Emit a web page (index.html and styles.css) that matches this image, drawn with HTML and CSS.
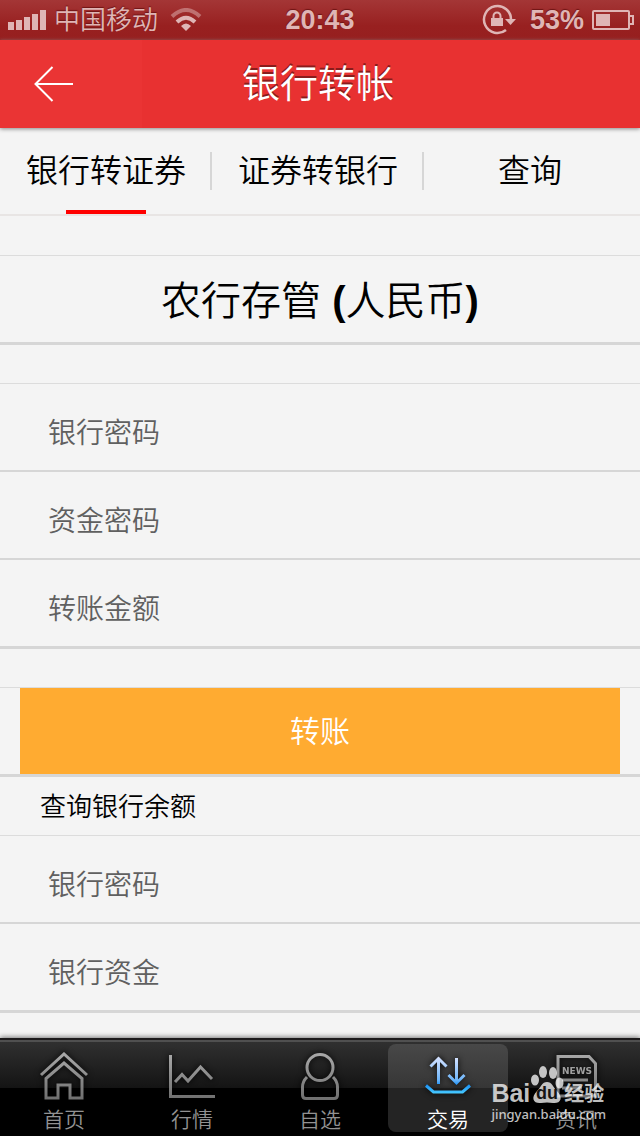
FILE: index.html
```html
<!DOCTYPE html>
<html lang="zh-CN">
<head>
<meta charset="utf-8">
<meta name="viewport" content="width=device-width, initial-scale=1">
<title>银行转帐</title>
<link rel="stylesheet" href="styles.css">
</head>
<body>
<div class="app">
  <div class="status">
    <div class="status-side">
      <svg class="signal" width="38" height="20" viewBox="0 0 38 20" fill="currentColor" aria-hidden="true"><path d="M0 12h6v8H0zM8 10h6v10H8zM16 7h6v13h-6zM24 4h6v16h-6zM32 0h6v20h-6z"/></svg>
      <span class="carrier">中国移动</span>
      <svg class="wifi" width="32" height="24" viewBox="0 0 32 24" fill="none" stroke="currentColor" aria-hidden="true"><path d="M2 8.500Q16-4.500 30 8.500" stroke-width="4" opacity=".5"/><path d="M7 14Q16 5.500 25 14" stroke-width="4"/><path d="M11 18Q16 13 21 18L16 23z" fill="currentColor" stroke="none"/></svg>
    </div>
    <time class="clock">20:43</time>
    <div class="status-side status-right">
      <svg width="34" height="32" viewBox="0 0 34 32" fill="none" stroke="currentColor" stroke-width="2.500" aria-hidden="true"><path d="M24 26A13.500 13.500 0 1 1 29 16"/><path d="M23 15h11l-5.500 6z" fill="currentColor" stroke="none"/><path d="M9 14h12v8H9z" fill="currentColor" stroke="none"/><path d="M11.500 15v-3a3.500 3.500 0 0 1 7 0v3" stroke-width="2"/></svg>
      <span class="battery-text">53%</span>
      <svg width="42" height="20" viewBox="0 0 42 20" fill="none" stroke="currentColor" stroke-width="2" aria-hidden="true"><rect x="1" y="1" width="36" height="18" rx="1"/><path d="M38 6h3v8h-3"/><path d="M4 4h14v12H4z" fill="currentColor" stroke="none"/></svg>
    </div>
  </div>

  <header class="header">
    <button class="back" type="button" aria-label="返回"><svg width="40" height="36" viewBox="0 0 40 36" fill="none" stroke="#fff" stroke-width="2" aria-hidden="true"><path d="M18.500 1L1.500 18l17 17M1.500 18H39"/></svg></button>
    <h1 class="title">银行转帐</h1>
  </header>

  <nav class="tabs">
    <a class="tab tab-current" href="#in" aria-current="page">银行转证券</a>
    <a class="tab" href="#out">证券转银行</a>
    <a class="tab" href="#query">查询</a>
  </nav>

  <main class="content">
    <form class="form">
      <div class="group">
        <button class="account" type="button">农行存管 <b>(</b>人民币<b>)</b></button>
      </div>
      <div class="group group-next">
        <input class="field" type="password" placeholder="银行密码" aria-label="银行密码">
        <input class="field" type="password" placeholder="资金密码" aria-label="资金密码">
        <input class="field" type="text" placeholder="转账金额" aria-label="转账金额">
      </div>
      <div class="group group-next submit-row">
        <button class="submit" type="button">转账</button>
      </div>
    </form>
    <form class="form">
      <h2 class="caption">查询银行余额</h2>
      <div class="group balance">
        <input class="field" type="password" placeholder="银行密码" aria-label="银行密码">
        <input class="field" type="text" placeholder="银行资金" aria-label="银行资金">
      </div>
    </form>
  </main>

  <nav class="bar">
    <a class="bar-item" href="#home">
      <svg class="icon" width="50" height="50" viewBox="0 0 50 50" fill="none" stroke="url(#grey)" stroke-width="3" aria-hidden="true"><defs><linearGradient id="grey" gradientUnits="userSpaceOnUse" x1="0" y1="0" x2="0" y2="50"><stop offset="0" stop-color="#aaa"/><stop offset="1" stop-color="#6c6c6c"/></linearGradient></defs><path d="M2 23L25 2l23 21"/><path d="M7 46V26.500L25 11l18 15.500V46H31V33H19v13z"/></svg>
      <span>首页</span>
    </a>
    <a class="bar-item" href="#market">
      <svg class="icon" width="50" height="50" viewBox="0 0 50 50" fill="none" stroke="url(#grey)" stroke-width="3" aria-hidden="true"><path d="M3.500 3v41.500H48"/><path d="M8 30l7-7.500 6 6.500L33.500 15 45 27"/></svg>
      <span>行情</span>
    </a>
    <a class="bar-item" href="#watch">
      <svg class="icon" width="50" height="50" viewBox="0 0 50 50" fill="none" stroke="url(#grey)" stroke-width="3" aria-hidden="true"><circle cx="25" cy="15.500" r="13"/><path d="M12 25c-3 3-4.500 6-4.500 10v8q0 3.500 3.500 3.500h28q3.500 0 3.500-3.500v-8c0-4-1.500-7-4.500-10"/></svg>
      <span>自选</span>
    </a>
    <a class="bar-item bar-current" href="#trade" aria-current="page">
      <svg class="icon" width="50" height="50" viewBox="0 0 50 50" fill="none" stroke="url(#blue)" stroke-width="3" aria-hidden="true"><defs><linearGradient id="blue" gradientUnits="userSpaceOnUse" x1="0" y1="6" x2="0" y2="42"><stop offset="0" stop-color="#d3e1ff"/><stop offset=".6" stop-color="#6fb6fa"/><stop offset=".75" stop-color="#1b91f5"/><stop offset="1" stop-color="#4bceff"/></linearGradient></defs><path d="M15.500 32V6M7.500 14.500l8-8 8 8M33.500 6v25M25.500 23l8 8 8-8M3 33.500l7.500 6.500h29l7.500-6.500"/></svg>
      <span>交易</span>
    </a>
    <a class="bar-item" href="#news">
      <svg class="icon" width="50" height="50" viewBox="0 0 50 50" fill="none" stroke="url(#grey)" stroke-width="3" aria-hidden="true"><path d="M7 4.500h31l6.500 7V44H7z"/><path d="M11 28h26M11 36h20"/><text class="news" x="11" y="22">NEWS</text></svg>
      <span>资讯</span>
    </a>
    <div class="mark">
      <div class="mark-logo">
        <b class="mark-bai">Bai</b>
        <svg width="34" height="38" viewBox="0 0 34 38" fill="currentColor" aria-hidden="true"><ellipse cx="5" cy="14" rx="4" ry="5.500"/><ellipse cx="13" cy="6" rx="4" ry="6"/><ellipse cx="23" cy="7" rx="4" ry="6"/><ellipse cx="29.500" cy="17" rx="4" ry="5.500"/><path d="M17 16c5 0 6 5 10 9 7 7 3 13-4 12q-6-1-12 0c-7 1-11-5-4-12 4-4 5-9 10-9z"/><text class="mark-du" x="6" y="33">du</text></svg>
        <b class="mark-exp">经验</b>
      </div>
      <span class="mark-url">jingyan.baidu.com</span>
    </div>
  </nav>
</div>
</body>
</html>
```
FILE: styles.css
```css
* { box-sizing: border-box; }

body {
  margin: 0;
  background: #f4f4f4;
  color: #000;
  font-family: "Liberation Sans", "Noto Sans CJK SC", sans-serif;
  font-weight: 350;
}

button, input {
  margin: 0;
  padding: 0;
  border: 0;
  border-radius: 0;
  background: none;
  color: inherit;
  font: inherit;
}

a { color: inherit; text-decoration: none; }
b { font-weight: 700; }

.app {
  display: flex;
  flex-direction: column;
  min-height: 100vh;
}

.status {
  display: flex;
  align-items: center;
  height: 40px;
  padding: 0 6px;
  background: linear-gradient(#a43636, #982020 65%, #961f1f);
  color: #dfb5b5;
  text-shadow: 0 -1px 1px #6e1414;
}

.status-side {
  display: flex;
  flex: 1;
  align-items: center;
  gap: 8px;
}

.status-right { gap: 8px; justify-content: flex-end; }
.signal { flex: none; margin-left: 2px; }
.carrier { font-size: 26px; line-height: 40px; }
.wifi { margin-left: 4px; }
.clock { font-size: 27px; font-weight: 700; }
.battery-text { margin-left: 6px; font-size: 27px; font-weight: 700; }

.header {
  display: grid;
  grid-template-columns: 142px 1fr 142px;
  align-items: center;
  height: 88px;
  background: #e83131;
  color: #fff;
  box-shadow: 0 1px 4px #888;
}

.back {
  display: flex;
  align-items: center;
  height: 88px;
  padding-left: 34px;
  background: #ea3434;
}

.title {
  margin: 0;
  padding-right: 4px;
  font-size: 38px;
  font-weight: 350;
  line-height: 88px;
  text-align: center;
  text-shadow: 0 -2px 0 #8a1c1c;
}

.tabs {
  display: grid;
  grid-template-columns: repeat(3, 1fr);
  height: 88px;
  padding-right: 4px;
  border-bottom: 2px solid #e8e5e4;
}

.tab {
  position: relative;
  font-size: 32px;
  line-height: 86px;
  text-align: center;
}

.tab + .tab::before {
  content: "";
  position: absolute;
  left: -2px;
  top: 24px;
  width: 2px;
  height: 38px;
  background: #d6d6d6;
}

.tab-current::after {
  content: "";
  position: absolute;
  left: 50%;
  bottom: 0;
  width: 80px;
  height: 4px;
  margin-left: -40px;
  background: #f00;
}

.content { flex: 1; }

.group {
  display: flex;
  flex-direction: column;
  margin-top: 39px;
  border-top: 1px solid #dcdcdc;
  border-bottom: 3px solid #d6d6d6;
}

.group-next { margin-top: 38px; }

.account { height: 86px; padding-top: 4px; font-size: 40px; line-height: 82px; }

.field {
  width: 100%;
  height: 86px;
  padding: 14px 48px 0;
  font-size: 28px;
}

.field + .field { height: 88px; border-top: 2px solid #d6d6d6; }
.field::placeholder { color: #606060; opacity: 1; }

.submit-row { padding: 0 20px; }

.submit {
  height: 86px;
  padding-top: 2px;
  background: #ffab31;
  color: #fff;
  font-size: 30px;
  line-height: 84px;
}

.caption {
  margin: 0;
  padding: 2px 0 0 40px;
  font-size: 26px;
  font-weight: 350;
  line-height: 56px;
}

.balance { margin-top: 0; }

.bar {
  position: relative;
  display: grid;
  grid-template-columns: repeat(5, 1fr);
  height: 98px;
  padding-top: 4px;
  border-top: 2px solid #1c1a1b;
  background: linear-gradient(#505050 0 2px, #303030 2px, #141414 48px, #000 48px);
  box-shadow: 0 -1px 5px #777;
  color: #929292;
  font-size: 21px;
}

.bar-item {
  display: flex;
  flex-direction: column;
  align-items: center;
  height: 88px;
  margin: 0 4px;
  padding-top: 8px;
  border-radius: 8px;
  line-height: 36px;
}

.icon { flex: none; filter: drop-shadow(0 0 3px #000); }

.bar-current {
  background: linear-gradient(#484848, #363636 44px, #242424 44px);
  color: #fff;
}

.news {
  fill: #a0a0a0;
  stroke: none;
  font: 700 9px "DejaVu Sans", sans-serif;
}

.mark {
  position: absolute;
  right: 34px;
  bottom: 12px;
  color: rgb(255 255 255 / 75%);
  line-height: 20px;
  pointer-events: none;
}

.mark-logo { display: flex; align-items: flex-end; }
.mark-bai { font-size: 25px; line-height: 22px; }
.mark-du { fill: #151515; font: 700 18px "Liberation Sans", sans-serif; }
.mark-exp { font-size: 20px; line-height: 20px; }

.mark-url {
  display: block;
  font-family: "Noto Sans", sans-serif;
  font-size: 13px;
  font-weight: 500;
}
```
